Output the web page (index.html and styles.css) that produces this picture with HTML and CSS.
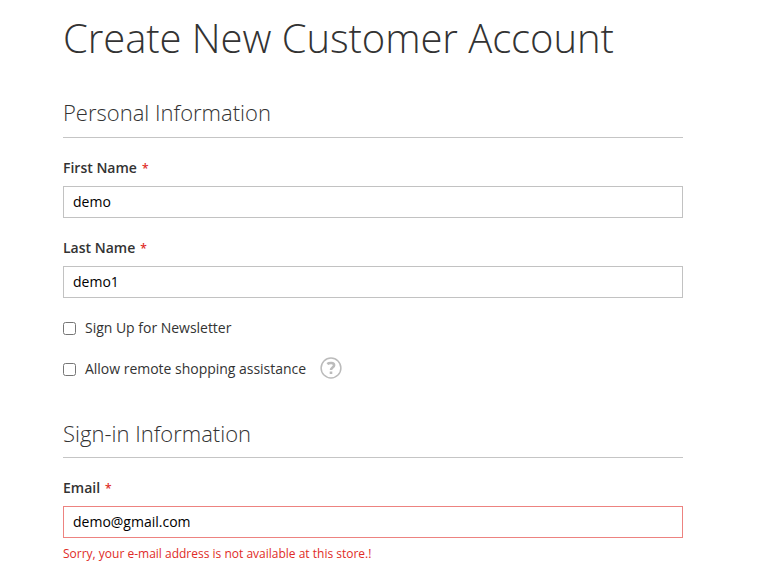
FILE: index.html
```
<!DOCTYPE html>
<html lang="en">
<head>
<meta charset="utf-8">
<title>Create New Customer Account</title>
<link rel="stylesheet" href="styles.css">
</head>
<body>
<main class="page">
  <h1 class="page-title">Create New Customer Account</h1>
  <form class="form">
    <fieldset class="fieldset">
      <h2 class="legend legend-first">Personal Information</h2>
      <div class="field">
        <label class="label" for="firstname">First Name</label>
        <input class="input" id="firstname" type="text" value="demo">
      </div>
      <div class="field">
        <label class="label" for="lastname">Last Name</label>
        <input class="input" id="lastname" type="text" value="demo1">
      </div>
      <div class="choice">
        <input class="checkbox" id="newsletter" type="checkbox">
        <label for="newsletter">Sign Up for Newsletter</label>
      </div>
      <div class="choice choice-help">
        <input class="checkbox" id="assistance" type="checkbox">
        <label for="assistance">Allow remote shopping assistance</label>
        <svg class="help" viewBox="0 0 22 22"><circle cx="11" cy="11" r="9.9"/><path d="M7.3 7.1C9.3 5.5 14.1 5.3 14.1 8.2C14.1 10.7 11 10.4 11 13.1M11 14.6V17"/></svg>
      </div>
    </fieldset>
    <fieldset class="fieldset">
      <h2 class="legend">Sign-in Information</h2>
      <div class="field">
        <label class="label" for="email">Email</label>
        <input class="input input-error" id="email" type="text" value="demo@gmail.com">
        <div class="error">Sorry, your e-mail address is not available at this store.!</div>
      </div>
    </fieldset>
  </form>
</main>
</body>
</html>
```
FILE: styles.css
```
* { box-sizing: border-box; }
body { margin: 0; background: #fff; color: #333; font: 14px/20px "Open Sans", sans-serif; }
.page { width: 620px; margin-left: 63px; padding-top: 16px; }
.page-title { margin: 0 0 40px; font-size: 40px; line-height: 44px; font-weight: 300; letter-spacing: -0.07px; white-space: nowrap; }
.fieldset { border: 0; margin: 0; padding: 0; }
.fieldset + .fieldset { margin-top: 40px; }
.legend { margin: 0 0 20px; height: 38px; border-bottom: 1px solid #c5c5c5; font-size: 22px; line-height: 26px; font-weight: 300; }
.legend-first { line-height: 24px; }
.field { margin-bottom: 20px; }
.fieldset + .fieldset .field { margin-bottom: 0; }
.label { display: block; height: 20px; margin-bottom: 8px; font-weight: 600; }
.label::after { content: "*"; margin-left: 5px; color: #e02b27; font-size: 12px; line-height: 1; }
.input { display: block; width: 100%; height: 32px; padding: 0 9px 2px; border: 1px solid #c2c2c2; border-radius: 0; background: #fff; color: #000; font: 14px/20px "Open Sans", sans-serif; }
.input-error { border-color: #ed8380; }
.choice { display: flex; align-items: center; height: 20px; margin-bottom: 20px; }
.choice-help { height: 22px; margin-bottom: 0; }
.choice label { letter-spacing: -0.02px; }
.checkbox { width: 13px; height: 13px; margin: 0 9px 0 0; }
.help { width: 22px; height: 22px; margin: -2px 0 0 14px; fill: none; stroke: #bbb; stroke-width: 1.5; }
.help path { stroke-width: 2.6; }
.error { margin-top: 7px; color: #e02b27; font-size: 12px; line-height: 17px; }
```
